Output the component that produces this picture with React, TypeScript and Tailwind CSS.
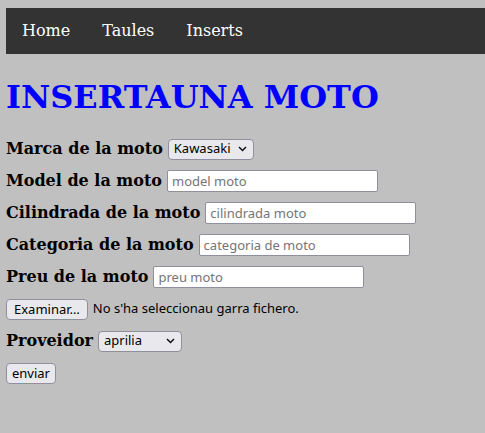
import React from "react";

const serif = "font-['DejaVu_Serif',serif]";
const ui = "font-['Noto_Sans',sans-serif] text-[13px]";

const fields = [
  { label: "Model de la moto", placeholder: "model moto" },
  { label: "Cilindrada de la moto", placeholder: "cilindrada moto" },
  { label: "Categoria de la moto", placeholder: "categoria de moto" },
  { label: "Preu de la moto", placeholder: "preu moto" },
];

const Field = ({ label, placeholder }: { label: string; placeholder: string }) => (
  <div className="flex items-center h-8 gap-[5px]">
    <span className="text-[16px] font-bold text-black">{label}</span>
    <input
      placeholder={placeholder}
      className={`${ui} w-[211px] h-[22px] bg-white border border-[#8f8f9d] rounded-[2px] px-1 placeholder:text-[#757575] outline-none`}
    />
  </div>
);

const Select = ({ value, width }: { value: string; width: string }) => (
  <div
    className={`${ui} ${width} h-[21px] flex items-center justify-between bg-[#e9e9ed] border border-[#8f8f9d] rounded-[4px] pl-[5px] pr-[6px] text-black`}
  >
    <span>{value}</span>
    <svg width="9" height="6" viewBox="0 0 9 6" fill="none" stroke="#111" strokeWidth="1.5">
      <path d="M1 1l3.5 3.5L8 1" />
    </svg>
  </div>
);

const Button = ({ children, px = "px-[5px]" }: { children: React.ReactNode; px?: string }) => (
  <button className={`${ui} h-[21px] ${px} bg-[#e9e9ed] border border-[#8f8f9d] rounded-[4px] text-black leading-none`}>
    {children}
  </button>
);

export default function App() {
  return (
    <div className={`min-h-screen bg-[#c0c0c0] pt-2 pl-1.5 ${serif}`}>
      <nav className="h-[46px] bg-[#333333] flex items-center gap-8 px-4 text-[16px] text-white">
        <span>Home</span>
        <span>Taules</span>
        <span>Inserts</span>
      </nav>

      <h1 className="text-[32px] font-bold text-[#0000ff] mt-[23px] mb-[16px] leading-tight">
        INSERTAUNA MOTO
      </h1>

      <form>
        <div className="flex items-center h-8 gap-[5px]">
          <span className="text-[16px] font-bold text-black">Marca de la moto</span>
          <Select value="Kawasaki" width="w-[86px]" />
        </div>
        {fields.map((f) => (
          <Field key={f.label} {...f} />
        ))}
        <div className="flex items-center h-8 gap-[5px]">
          <Button px="px-[7px]">Examinar…</Button>
          <span className={`${ui} text-black`}>No s'ha seleccionau garra fichero.</span>
        </div>
        <div className="flex items-center h-8 gap-[5px]">
          <span className="text-[16px] font-bold text-black">Proveidor</span>
          <Select value="aprilia" width="w-[84px]" />
        </div>
        <div className="flex items-center h-8">
          <Button>enviar</Button>
        </div>
      </form>
    </div>
  );
}
